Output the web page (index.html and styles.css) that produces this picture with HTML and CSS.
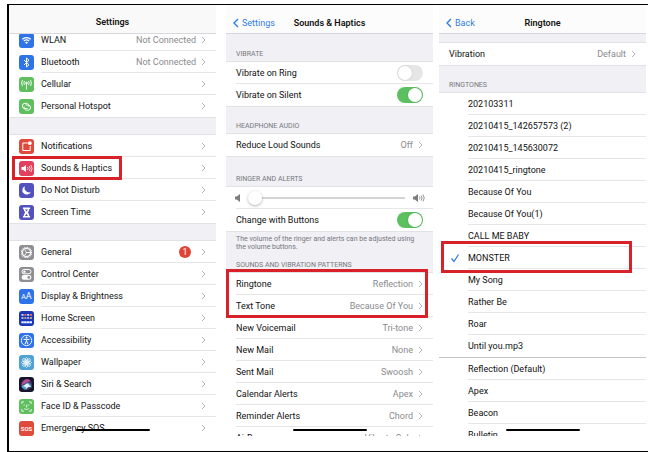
FILE: index.html
```html
<!DOCTYPE html>
<html lang="en">
<head>
    <meta charset="UTF-8">
    <meta name="viewport" content="width=device-width, initial-scale=1.0">
    <title>Settings</title>
    <link rel="stylesheet" href="styles.css">
</head>
<body>
    <svg class="defs" aria-hidden="true">
        <symbol id="chevron" viewBox="0 0 5 8"><path d="M1 1l3 3-3 3" fill="none" stroke="#b4b4b8" stroke-width="1"/></symbol>
        <symbol id="back" viewBox="0 0 7 10"><path d="M6 1L2 5l4 4" fill="none" stroke="#2f7ee0" stroke-width="1.4"/></symbol>
    </svg>
    <main class="frame">
        <!-- Settings -->
        <section class="panel panel-main">
            <header class="header"><h1>Settings</h1></header>
            <div class="content scrolled">
                <ul class="group">
                    <li><a class="row" href="#">
                        <svg class="icon blue" viewBox="0 0 15 15"><path d="M3.3 6.3a6 6 0 0 1 8.4 0M4.8 8.1a4 4 0 0 1 5.4 0" fill="none" stroke="#fff" stroke-width="1.2"/><path d="M6 9.5a2.2 2.2 0 0 1 3 0l-1.5 1.6z" fill="#fff"/></svg>
                        <span class="name">WLAN</span><span class="value">Not Connected</span><svg class="chevron"><use href="#chevron"/></svg></a></li>
                    <li><a class="row" href="#">
                        <svg class="icon blue" viewBox="0 0 15 15"><path d="M5 5l5 4.8-2.5 2.2V3l2.5 2.2L5 10" fill="none" stroke="#fff" stroke-width="1"/></svg>
                        <span class="name">Bluetooth</span><span class="value">Not Connected</span><svg class="chevron"><use href="#chevron"/></svg></a></li>
                    <li><a class="row" href="#">
                        <svg class="icon green" viewBox="0 0 15 15"><g fill="none" stroke="#fff" stroke-width=".9"><path d="M7.5 7v5.500M5.500 4a3.500 3.500 0 0 0 0 4M9.500 4a3.500 3.500 0 0 1 0 4M3.500 3a5.500 5.500 0 0 0 0 6M11.500 3a5.500 5.500 0 0 1 0 6"/></g><circle cx="7.5" cy="6" r="1.2" fill="#fff"/></svg>
                        <span class="name">Cellular</span><svg class="chevron"><use href="#chevron"/></svg></a></li>
                    <li><a class="row" href="#">
                        <svg class="icon green" viewBox="0 0 15 15"><g fill="none" stroke="#fff" stroke-width="1"><path d="M8.5 9.5H6a2.6 2.6 0 0 1 0-5.2h1.5a2.6 2.6 0 0 1 2.3 3.5"/><path d="M6.5 6H9a2.6 2.6 0 0 1 0 5.2H7.5a2.6 2.6 0 0 1-2.3-3.5"/></g></svg>
                        <span class="name">Personal Hotspot</span><svg class="chevron"><use href="#chevron"/></svg></a></li>
                </ul>
                <ul class="group">
                    <li><a class="row" href="#">
                        <svg class="icon red" viewBox="0 0 15 15"><path d="M8.5 4H3.8v7.5h7.4V7" fill="none" stroke="#fff" stroke-width="1"/><circle cx="10.8" cy="4.2" r="1.9" fill="#fff"/></svg>
                        <span class="name">Notifications</span><svg class="chevron"><use href="#chevron"/></svg></a></li>
                    <li class="marked"><a class="row" href="#">
                        <svg class="icon pink" viewBox="0 0 15 15"><path d="M2.5 6h1.8L7 4v7L4.300 9H2.500z" fill="#fff"/><path d="M8.500 6a2.500 2.500 0 0 1 0 3M10.200 5a4 4 0 0 1 0 5M11.800 4a6 6 0 0 1 0 7" fill="none" stroke="#fff" stroke-width=".8"/></svg>
                        <span class="name">Sounds &amp; Haptics</span><svg class="chevron"><use href="#chevron"/></svg></a><span class="highlight highlight-sounds"></span></li>
                    <li><a class="row" href="#">
                        <svg class="icon indigo" viewBox="0 0 15 15"><path d="M5.8 3.200a4.400 4.400 0 1 0 5.900 5.800A4.500 4.500 0 0 1 5.800 3.200z" fill="#fff"/></svg>
                        <span class="name">Do Not Disturb</span><svg class="chevron"><use href="#chevron"/></svg></a></li>
                    <li><a class="row" href="#">
                        <svg class="icon indigo" viewBox="0 0 15 15"><path d="M4 2.500h7v1.600h-.7c0 2-1.300 2.600-1.300 3.400s1.300 1.400 1.300 3.400h.7v1.600H4v-1.600h.7c0-2 1.300-2.600 1.300-3.400S4.700 6.100 4.700 4.100H4z" fill="#fff"/><path d="M6 4.500h3L7.500 6.500zM7.500 8.700L9 11H6z" fill="#5351bd"/></svg>
                        <span class="name">Screen Time</span><svg class="chevron"><use href="#chevron"/></svg></a></li>
                </ul>
                <ul class="group">
                    <li><a class="row" href="#">
                        <svg class="icon gray" viewBox="0 0 15 15"><g fill="none" stroke="#fff"><circle cx="7.5" cy="7.5" r="5" stroke-width="1.2" stroke-dasharray="1 .57"/><circle cx="7.5" cy="7.5" r="4" stroke-width="1.1"/><path d="M11 7.5H7.5L5.7 4.5M7.5 7.5l-1.8 3" stroke-width=".9"/></g></svg>
                        <span class="name">General</span><span class="badge">1</span><svg class="chevron"><use href="#chevron"/></svg></a></li>
                    <li><a class="row" href="#">
                        <svg class="icon gray" viewBox="0 0 15 15"><rect x="3" y="2.5" width="9" height="4.3" rx="2.1" fill="none" stroke="#fff"/><circle cx="5.4" cy="4.65" r="1.2" fill="#fff"/><rect x="2.6" y="8" width="9.8" height="4.8" rx="2.4" fill="#fff"/><circle cx="9.8" cy="10.4" r="1.4" fill="#8e8e93"/></svg>
                        <span class="name">Control Center</span><svg class="chevron"><use href="#chevron"/></svg></a></li>
                    <li><a class="row" href="#">
                        <span class="icon blue letters"><small>A</small>A</span>
                        <span class="name">Display &amp; Brightness</span><svg class="chevron"><use href="#chevron"/></svg></a></li>
                    <li><a class="row" href="#">
                        <svg class="icon navy" viewBox="0 0 15 15"><path d="M2.5 3.9h2M8.200 3.900h2M2.500 7h2M8.200 7h2" stroke="#d8e2ff" stroke-width="1.7"/><path d="M5.400 3.900h2M11 3.900h2" stroke="#f0695c" stroke-width="1.7"/><path d="M5.400 7h2M11 7h2" stroke="#eac35b" stroke-width="1.7"/><path d="M2.500 11.300h10.500" stroke="#7da4ff" stroke-width="2.2"/><path d="M2.500 11.300h10.500" stroke="#fff" stroke-width="1.5" stroke-dasharray="2 .8"/></svg>
                        <span class="name">Home Screen</span><svg class="chevron"><use href="#chevron"/></svg></a></li>
                    <li><a class="row" href="#">
                        <svg class="icon blue" viewBox="0 0 15 15"><circle cx="7.5" cy="7.5" r="5.2" fill="none" stroke="#fff" stroke-width=".9"/><circle cx="7.5" cy="4.5" r="1" fill="#fff"/><path d="M4.500 6.200l3 .5 3-.5M7.500 6.500v2M6 11.300l1.200-3h.6l1.200 3" fill="none" stroke="#fff" stroke-width="1"/></svg>
                        <span class="name">Accessibility</span><svg class="chevron"><use href="#chevron"/></svg></a></li>
                    <li><a class="row" href="#">
                        <svg class="icon sky" viewBox="0 0 15 15"><g fill="none" stroke="#fff" stroke-width=".7"><ellipse cx="7.5" cy="7.5" rx="1.7" ry="5"/><ellipse cx="7.5" cy="7.5" rx="1.7" ry="5" transform="rotate(45 7.5 7.5)"/><ellipse cx="7.5" cy="7.5" rx="1.7" ry="5" transform="rotate(90 7.5 7.5)"/><ellipse cx="7.5" cy="7.5" rx="1.7" ry="5" transform="rotate(135 7.5 7.5)"/></g><circle cx="7.5" cy="7.5" r="1.3" fill="#fff"/></svg>
                        <span class="name">Wallpaper</span><svg class="chevron"><use href="#chevron"/></svg></a></li>
                    <li><a class="row" href="#">
                        <svg class="icon siri" viewBox="0 0 15 15"><circle cx="7.5" cy="7.5" r="5.5" fill="#453765"/><path d="M2.500 8C4 2 9 1 11.500 4 9 4 7 7 2.500 8z" fill="#b54e93"/><path d="M2.500 9c4-1 5-4 7.500-3s2 4 3 4.500C11 10 9 9 7.500 12.500 6 13 3.500 12 2.500 9z" fill="#4c9bd0"/><path d="M3 9c3 0 4-3 5.500-2.500S10 9 12 10c-3-.3-3.500 0-4.500 2C7 9.500 5 9.500 3 9z" fill="#e5f3f8"/></svg>
                        <span class="name">Siri &amp; Search</span><svg class="chevron"><use href="#chevron"/></svg></a></li>
                    <li><a class="row" href="#">
                        <svg class="icon green" viewBox="0 0 15 15"><path d="M2.800 5V2.800H5M10 2.800h2.200V5M12.200 10v2.200H10M5 12.200H2.800V10M5.200 5.500v1.200M9.800 5.500v1.200M7.700 5.500v2.700H7M5.200 9.700q2.300 1.600 4.600 0" fill="none" stroke="#fff" stroke-width=".8"/></svg>
                        <span class="name">Face ID &amp; Passcode</span><svg class="chevron"><use href="#chevron"/></svg></a></li>
                    <li><a class="row" href="#">
                        <span class="icon red letters sos">SOS</span>
                        <span class="name">Emergency SOS</span><svg class="chevron"><use href="#chevron"/></svg></a></li>
                </ul>
            </div>
            <span class="home-bar"></span>
        </section>

        <!-- Sounds & Haptics -->
        <section class="panel">
            <header class="header tall">
                <a class="back" href="#"><svg><use href="#back"/></svg>Settings</a>
                <h1>Sounds &amp; Haptics</h1>
            </header>
            <div class="content">
                <h2 class="label">Vibrate</h2>
                <ul class="group">
                    <li><label class="row"><span class="name">Vibrate on Ring</span><input class="switch" type="checkbox"></label></li>
                    <li><label class="row"><span class="name">Vibrate on Silent</span><input class="switch" type="checkbox" checked></label></li>
                </ul>
                <h2 class="label">Headphone Audio</h2>
                <ul class="group">
                    <li><a class="row" href="#"><span class="name">Reduce Loud Sounds</span><span class="value">Off</span><svg class="chevron"><use href="#chevron"/></svg></a></li>
                </ul>
                <h2 class="label label-far">Ringer and Alerts</h2>
                <ul class="group">
                    <li><div class="row volume">
                        <svg class="speaker" viewBox="0 0 12 10"><path d="M1 3.500h1.800L6 1v8L2.800 6.500H1z" fill="#7b7b80"/></svg>
                        <input class="slider" type="range" min="0" max="100" value="0" aria-label="Ringer and alerts volume">
                        <svg class="speaker" viewBox="0 0 12 10"><path d="M0 3.500h1.800L5 1v8L1.800 6.500H0z" fill="#7b7b80"/><path d="M6.500 3.500a2.500 2.500 0 0 1 0 3M8.200 2.500a4 4 0 0 1 0 5M10 1.500a6 6 0 0 1 0 7" fill="none" stroke="#7b7b80" stroke-width=".8"/></svg>
                    </div></li>
                    <li><label class="row"><span class="name">Change with Buttons</span><input class="switch" type="checkbox" checked></label></li>
                </ul>
                <p class="note">The volume of the ringer and alerts can be adjusted using the volume buttons.</p>
                <h2 class="label label-near">Sounds and Vibration Patterns</h2>
                <ul class="group marked">
                    <li><a class="row" href="#"><span class="name">Ringtone</span><span class="value">Reflection</span><svg class="chevron"><use href="#chevron"/></svg></a></li>
                    <li><a class="row" href="#"><span class="name">Text Tone</span><span class="value">Because Of You</span><svg class="chevron"><use href="#chevron"/></svg></a></li>
                    <li><a class="row" href="#"><span class="name">New Voicemail</span><span class="value">Tri-tone</span><svg class="chevron"><use href="#chevron"/></svg></a></li>
                    <li><a class="row" href="#"><span class="name">New Mail</span><span class="value">None</span><svg class="chevron"><use href="#chevron"/></svg></a></li>
                    <li><a class="row" href="#"><span class="name">Sent Mail</span><span class="value">Swoosh</span><svg class="chevron"><use href="#chevron"/></svg></a></li>
                    <li><a class="row" href="#"><span class="name">Calendar Alerts</span><span class="value">Apex</span><svg class="chevron"><use href="#chevron"/></svg></a></li>
                    <li><a class="row" href="#"><span class="name">Reminder Alerts</span><span class="value">Chord</span><svg class="chevron"><use href="#chevron"/></svg></a></li>
                    <li><a class="row" href="#"><span class="name">AirDrop</span><span class="value">Vibrate Only</span><svg class="chevron"><use href="#chevron"/></svg></a></li>
                    <li class="highlight highlight-tones" aria-hidden="true"></li>
                </ul>
            </div>
            <span class="home-bar"></span>
        </section>

        <!-- Ringtone -->
        <section class="panel">
            <header class="header tall">
                <a class="back" href="#"><svg><use href="#back"/></svg>Back</a>
                <h1>Ringtone</h1>
            </header>
            <div class="content">
                <ul class="group spaced">
                    <li><a class="row" href="#"><span class="name">Vibration</span><span class="value">Default</span><svg class="chevron"><use href="#chevron"/></svg></a></li>
                </ul>
                <h2 class="label">Ringtones</h2>
                <ul class="group tones">
                    <li><label class="row"><input type="radio" name="tone"><span class="name">202103311</span></label></li>
                    <li><label class="row"><input type="radio" name="tone"><span class="name">20210415_142657573 (2)</span></label></li>
                    <li><label class="row"><input type="radio" name="tone"><span class="name">20210415_145630072</span></label></li>
                    <li><label class="row"><input type="radio" name="tone"><span class="name">20210415_ringtone</span></label></li>
                    <li><label class="row"><input type="radio" name="tone"><span class="name">Because Of You</span></label></li>
                    <li><label class="row"><input type="radio" name="tone"><span class="name">Because Of You(1)</span></label></li>
                    <li><label class="row"><input type="radio" name="tone"><span class="name">CALL ME BABY</span></label></li>
                    <li class="marked"><label class="row"><input type="radio" name="tone" checked><svg class="tick" viewBox="0 0 10 10"><path d="M1.500 5.500L4 8.500l4.500-7" fill="none" stroke="#2f7ee0" stroke-width="1.3"/></svg><span class="name">MONSTER</span></label><span class="highlight highlight-monster"></span></li>
                    <li><label class="row"><input type="radio" name="tone"><span class="name">My Song</span></label></li>
                    <li><label class="row"><input type="radio" name="tone"><span class="name">Rather Be</span></label></li>
                    <li><label class="row"><input type="radio" name="tone"><span class="name">Roar</span></label></li>
                    <li><label class="row"><input type="radio" name="tone"><span class="name">Until you.mp3</span></label></li>
                </ul>
                <ul class="group tones defaults">
                    <li><label class="row"><input type="radio" name="tone"><span class="name">Reflection (Default)</span></label></li>
                    <li><label class="row"><input type="radio" name="tone"><span class="name">Apex</span></label></li>
                    <li><label class="row"><input type="radio" name="tone"><span class="name">Beacon</span></label></li>
                    <li><label class="row"><input type="radio" name="tone"><span class="name">Bulletin</span></label></li>
                </ul>
            </div>
            <span class="home-bar"></span>
        </section>
    </main>
</body>
</html>
```
FILE: styles.css
```css
* {
    box-sizing: border-box;
}
body {
    margin: 0;
    font-family: Roboto, Inter, "Liberation Sans", sans-serif;
    font-size: 9px;
    line-height: 12px;
    color: #111;
    background-color: #fff;
}
h1, h2, p, ul {
    margin: 0;
    padding: 0;
    font-weight: normal;
}
ul {
    list-style: none;
}
a {
    color: inherit;
    text-decoration: none;
}
.defs {
    display: none;
}

/* Outer frame and the three phone screens */
.frame {
    display: flex;
    gap: 6px;
    height: calc(100vh - 4px);
    margin: 4px 0 0 7px;
    padding-right: 2px;
    border: 1px solid #000;
    border-left-width: 2px;
    border-right: none;
}
.panel {
    position: relative;
    flex: 1;
    min-width: 0;
    display: flex;
    flex-direction: column;
    padding-bottom: 15px;
}
.panel-main {
    margin-right: 4px;
}
.header {
    position: relative;
    z-index: 1;
    flex: none;
    height: 29px;
    padding-top: 11px;
    background-color: #f9f9f9;
    border-bottom: 1px solid #d8d8dc;
}
.header.tall {
    padding-top: 12px;
    background-color: #fcfcfc;
}
.header h1 {
    font-size: 9px;
    font-weight: 600;
    text-align: center;
}
.back {
    position: absolute;
    left: 6px;
    display: flex;
    align-items: center;
    gap: 3px;
    color: #2f7ee0;
}
.back svg {
    width: 7px;
    height: 10px;
}
.content {
    flex: 1;
    min-height: 0;
    overflow: hidden;
    background-color: #f0f0f5;
}

/* Grouped rows */
.group {
    background-color: #fff;
    box-shadow: 0 1px 0 #e2e2e6, 0 -1px 0 #e2e2e6;
}
.scrolled .group:first-child {
    margin-top: -5px;
}
.group + .group {
    margin-top: 18px;
}
.group.spaced {
    margin-top: 9px;
}
.row {
    position: relative;
    display: flex;
    align-items: center;
    height: 22px;
    padding: 0 10px;
}
.group li:not(:last-child) .row::after {
    content: "";
    position: absolute;
    right: 0;
    bottom: 0;
    left: 10px;
    height: 1px;
    background-color: #e6e6e9;
}
.panel-main .group li:not(:last-child) .row::after {
    left: 32px;
}
.name {
    flex: 1;
    white-space: nowrap;
}
.value {
    color: #8a8a8e;
}
.chevron {
    width: 5px;
    height: 8px;
    margin-left: 5px;
}
.badge {
    width: 12px;
    height: 12px;
    margin-right: 5px;
    border-radius: 50%;
    background-color: #e04434;
    color: #fff;
    text-align: center;
}

.icon {
    width: 15px;
    height: 15px;
    margin-right: 7px;
    border-radius: 3px;
}
.blue { background-color: #2f73e8; }
.green { background-color: #5fbf5f; }
.red { background-color: #e04a3c; }
.pink { background-color: #e2405c; }
.indigo { background-color: #5351bd; }
.gray { background-color: #8e8e93; }
.navy { background-color: #1c36b8; }
.sky { background-color: #4ea3d4; }
.siri { background-color: #17152b; }
.letters {
    color: #fff;
    font-size: 9px;
    line-height: 15px;
    text-align: center;
}
.letters small {
    font-size: 7px;
}
.sos {
    font-size: 6px;
    font-weight: 600;
}

/* Section labels and notes */
.label {
    padding: 16px 10px 3px;
    color: #77777c;
    font-size: 7px;
    line-height: 9px;
    text-transform: uppercase;
}
.label-far {
    padding-top: 19px;
}
.label-near {
    padding-top: 10px;
}
.note {
    padding: 4px 10px 0;
    color: #77777c;
    font-size: 7px;
    line-height: 8px;
}

.switch {
    appearance: none;
    width: 26px;
    height: 16px;
    margin: 0;
    padding: 1px;
    border-radius: 8px;
    background-color: #e6e6e8;
}
.switch::before {
    content: "";
    display: block;
    width: 14px;
    height: 14px;
    border-radius: 50%;
    background-color: #fff;
    box-shadow: 0 0 2px rgba(0, 0, 0, 0.2);
}
.switch:checked {
    background-color: #5bc160;
}
.switch:checked::before {
    margin-left: auto;
}
.volume {
    padding: 0 8px;
}
.speaker {
    width: 12px;
    height: 10px;
}
.slider {
    appearance: none;
    flex: 1;
    min-width: 0;
    height: 14px;
    margin: 0 8px 0 2px;
    background: linear-gradient(#d4d4d6, #d4d4d6) center / 100% 2px no-repeat;
}
.slider::-webkit-slider-thumb {
    appearance: none;
    width: 14px;
    height: 14px;
    border-radius: 50%;
    background-color: #fff;
    box-shadow: 0 1px 3px rgba(0, 0, 0, 0.3);
}

/* Ringtone choices */
.tones .row {
    padding-left: 29px;
}
.group.tones li:not(:last-child) .row::after {
    left: 29px;
}
.tones input {
    appearance: none;
    position: absolute;
    margin: 0;
}
.tick {
    position: absolute;
    left: 11px;
    width: 10px;
    height: 10px;
}
.group.defaults {
    margin-top: 0;
    border-top: 1px solid #c4c4c8;
    box-shadow: none;
}

/* Red marker boxes drawn over the rows */
.marked {
    position: relative;
}
.highlight {
    position: absolute;
    z-index: 1;
    border: 3px solid #d9212a;
    pointer-events: none;
}
.highlight-sounds {
    top: -1px;
    left: 3px;
    width: 110px;
    height: 24px;
}
.highlight-tones {
    top: -4px;
    right: 5px;
    left: 0;
    height: 49px;
}
.highlight-monster {
    top: -6px;
    right: 14px;
    left: 2px;
    height: 32px;
}
.home-bar {
    position: absolute;
    z-index: 2;
    bottom: 20px;
    left: 50%;
    width: 74px;
    height: 2px;
    margin-left: -37px;
    border-radius: 1px;
    background-color: #000;
}
```
